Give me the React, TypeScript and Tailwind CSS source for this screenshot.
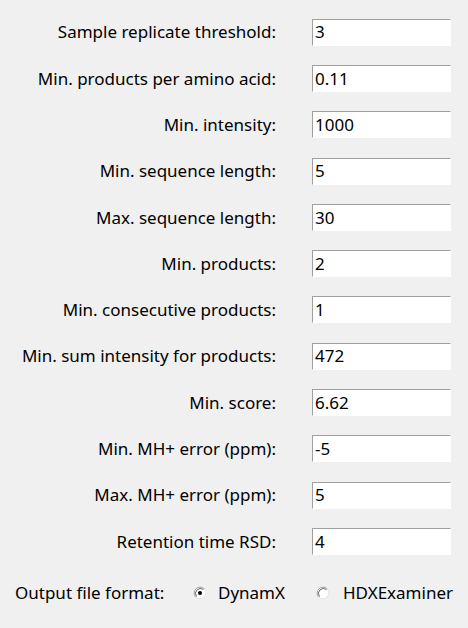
import React from 'react';

const FIELDS: { label: string; value: string }[] = [
    { label: 'Sample replicate threshold:', value: '3' },
    { label: 'Min. products per amino acid:', value: '0.11' },
    { label: 'Min. intensity:', value: '1000' },
    { label: 'Min. sequence length:', value: '5' },
    { label: 'Max. sequence length:', value: '30' },
    { label: 'Min. products:', value: '2' },
    { label: 'Min. consecutive products:', value: '1' },
    { label: 'Min. sum intensity for products:', value: '472' },
    { label: 'Min. score:', value: '6.62' },
    { label: 'Min. MH+ error (ppm):', value: '-5' },
    { label: 'Max. MH+ error (ppm):', value: '5' },
    { label: 'Retention time RSD:', value: '4' },
];

const Radio: React.FC<{ checked?: boolean }> = ({ checked }) => (
    <svg width="14" height="14" viewBox="0 0 14 14" className="flex-none">
        <circle cx="7" cy="7" r="6" fill="#ffffff" />
        <path d="M2.76 11.24 A6 6 0 0 1 11.24 2.76" fill="none" stroke="#a0a0a0" strokeWidth="1" />
        <path d="M3.5 10.5 A5 5 0 0 1 10.5 3.5" fill="none" stroke="#696969" strokeWidth="1" />
        <path d="M11.24 2.76 A6 6 0 0 1 2.76 11.24" fill="none" stroke="#e3e3e3" strokeWidth="1" />
        {checked && <circle cx="7" cy="7" r="2" fill="#000000" />}
    </svg>
);

export default function App() {
    return (
        <div className="w-[468px] h-[628px] bg-[#f0f0f0] text-black text-[17px] font-['Noto_Sans','Open_Sans',sans-serif] overflow-hidden">
            <div className="grid grid-cols-[276px_139px] gap-x-[36px] pt-[9px]">
                {FIELDS.map((f) => (
                    <React.Fragment key={f.label}>
                        <div className="h-[46.3px] flex items-center justify-end whitespace-nowrap">{f.label}</div>
                        <div className="h-[46.3px] flex items-center">
                            <div className="w-full h-[27px] bg-white border-t border-l border-t-[#a0a0a0] border-l-[#a0a0a0] border-r border-b border-r-[#ffffff] border-b-[#ffffff] flex items-center pl-[2px]">
                                {f.value}
                            </div>
                        </div>
                    </React.Fragment>
                ))}
            </div>
            <div className="flex items-center h-[30px] mt-[13px] pl-[15px] whitespace-nowrap">
                <span className="w-[178px]">Output file format:</span>
                <span className="w-[123px] flex items-center gap-[11px]">
                    <Radio checked />
                    <span>DynamX</span>
                </span>
                <span className="flex items-center gap-[13px]">
                    <Radio />
                    <span>HDXExaminer</span>
                </span>
            </div>
        </div>
    );
}
